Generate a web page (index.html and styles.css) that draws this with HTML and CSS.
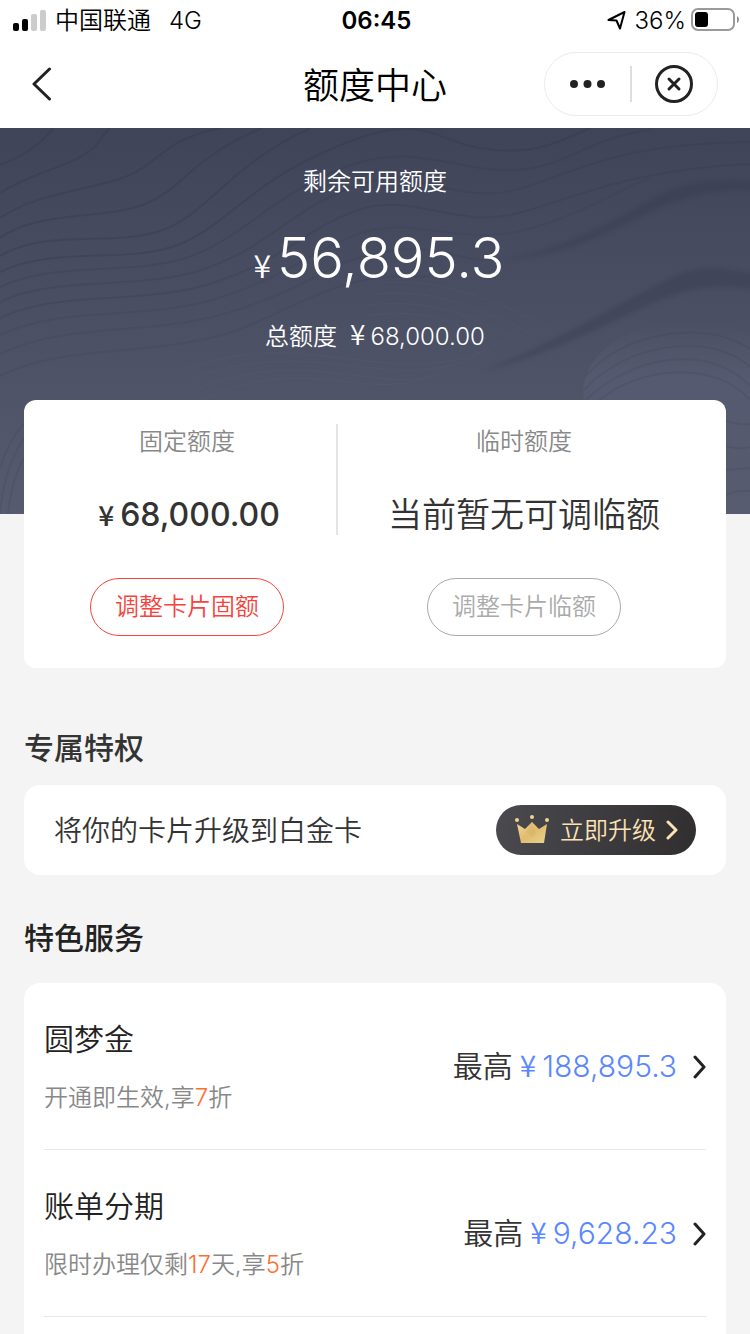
FILE: index.html
```html
<!DOCTYPE html>
<html lang="zh-CN">
<head>
<meta charset="utf-8">
<meta name="viewport" content="width=device-width, initial-scale=1">
<title>额度中心</title>
<link rel="stylesheet" href="styles.css">
</head>
<body>
<div class="status">
  <div class="status-side">
    <svg class="signal" width="34" height="22" viewBox="0 0 34 22" aria-hidden="true"><rect x="0" y="14" width="6" height="8" rx="2"/><rect x="9" y="10" width="6" height="12" rx="2"/><rect class="bar-off" x="18" y="5" width="6" height="17" rx="2"/><rect class="bar-off" x="27" y="1" width="6" height="21" rx="2"/></svg>
    <span class="carrier">中国联通</span>
    <span>4G</span>
  </div>
  <time class="clock">06:45</time>
  <div class="status-side status-end">
    <svg width="20" height="20" viewBox="0 0 20 20" fill="none" stroke="#000" stroke-width="2" stroke-linejoin="round" aria-hidden="true"><path d="M17.500 2 1.500 10 9.500 10.500 13 18.500Z"/></svg>
    <span class="percent">36%</span>
    <svg width="49" height="24" viewBox="0 0 49 24" aria-hidden="true"><rect x="1" y="1" width="42" height="21" rx="6" fill="none" stroke="#9a9a9a" stroke-width="2"/><rect x="4" y="4" width="13" height="15" rx="3"/><path d="M46 8q2 1 2 3.500t-2 3.500Z" fill="#8f8f8f"/></svg>
  </div>
</div>
<header class="nav">
  <button class="icon-btn back" aria-label="返回"><svg width="20" height="36" viewBox="0 0 20 36" fill="none" stroke="#222" stroke-width="3" stroke-linecap="round" stroke-linejoin="round"><path d="M17.500 3 2 18 17.500 33"/></svg></button>
  <h1 class="nav-title">额度中心</h1>
  <div class="capsule">
    <button class="icon-btn capsule-btn" aria-label="更多"><svg width="36" height="10" viewBox="0 0 36 10" fill="#222"><circle cx="4" cy="5" r="4"/><circle cx="17.500" cy="5" r="4"/><circle cx="31" cy="5" r="4"/></svg></button>
    <button class="icon-btn capsule-btn" aria-label="关闭"><svg width="40" height="40" viewBox="0 0 40 40" fill="none" stroke="#222" stroke-linecap="round"><circle cx="19" cy="20" r="17.500" stroke-width="3"/><path d="M14 15 24 25M24 15 14 25" stroke-width="3"/></svg></button>
  </div>
</header>
<main class="page">
  <section class="hero">
    <svg class="waves" viewBox="0 0 750 386" preserveAspectRatio="none" fill="none" aria-hidden="true">
      <defs>
        <linearGradient id="dome" x1="0" y1="0" x2="0" y2="1"><stop offset="0" stop-color="#5f647b" stop-opacity="0"/><stop offset=".3" stop-color="#5f647b" stop-opacity=".4"/><stop offset="1" stop-color="#5f647b" stop-opacity=".1"/></linearGradient>
        <filter id="soft" x="-10%" y="-20%" width="120%" height="140%"><feGaussianBlur stdDeviation="2"/></filter>
      </defs>
      <path d="M584 272C578 225 630 196 680 194C715 192 735 198 750 208V386H600Z" fill="url(#dome)"/>
      <g fill="#32374c" opacity=".32" filter="url(#soft)">
        <path d="M480 244C560 213 610 180 660 155S720 142 760 146V162C725 158 700 156 660 172S560 224 480 244Z"/>
        <path d="M500 132C560 123 610 95 650 72S720 52 760 53V63C725 60 690 66 655 82S565 130 500 132Z"/>
      </g>
      <g stroke="#32374c" stroke-width="2" opacity=".32">
        <path d="M0 37C25 28 44 13 53 0"/>
        <path d="M0 65C30 46 62 40 82 28S100 8 110 0"/>
        <path d="M0 90C36 65 90 62 125 49S160 13 220 0"/>
        <path d="M0 110C38 82 105 92 145 76S190 30 262 0"/>
        <path d="M0 128C48 100 112 119 160 103S225 40 310 0"/>
        <path d="M0 144C55 117 130 137 180 116S250 54 338 18 430 12 480 20 550 18 590 0"/>
      </g>
      <g stroke="#32374c" stroke-width="2" opacity=".22">
        <path d="M0 159C55 132 140 149 194 127S275 66 345 39 460 46 516 42 580 12 650 2"/>
        <path d="M0 174C55 146 145 164 210 139S285 86 350 60 450 76 510 63 600 16 750 14"/>
        <path d="M0 190C60 161 145 178 216 154S302 103 355 83 455 99 510 87 620 42 750 36"/>
      </g>
      <g stroke="#32374c" stroke-width="2" opacity=".14">
        <path d="M0 207C65 176 150 194 225 168S315 119 365 104 460 117 520 103 620 60 650 50"/>
        <path d="M0 226C70 192 155 210 240 181S325 135 382 124 465 137 500 131"/>
        <path d="M0 248C65 213 175 232 255 195S360 144 430 149"/>
        <path d="M0 386Q4 340 24 310M8 386Q12 350 24 330M0 340Q10 310 24 296"/>
        <path d="M586 248C620 205 705 190 750 221M584 262C625 216 710 202 750 239M586 272C630 228 710 214 750 258M600 272C640 238 716 232 750 272"/>
        <path d="M724 292Q740 298 750 296M724 318Q740 322 750 319M724 342 750 340M724 368Q736 362 750 363"/>
      </g>
      <g stroke="#747990" stroke-width="1" opacity=".1">
        <path d="M190 240C310 195 400 270 500 215M195 250C310 205 400 270 480 226M200 260C310 215 395 275 450 240M205 270C310 225 365 275 430 248M380 155C440 150 490 170 550 200M375 166C430 160 480 180 530 205M370 177C420 170 470 185 510 209M365 188C410 180 450 190 490 212"/>
      </g>
    </svg>
    <p class="hero-label">剩余可用额度</p>
    <p class="hero-amount"><span class="yen hero-yen">¥</span>56,895.3</p>
    <p class="hero-total">总额度<span class="yen total-yen">¥</span>68,000.00</p>
  </section>

  <section class="card quotas">
    <div class="quota quota-fixed">
      <div class="quota-info">
        <h2 class="quota-label">固定额度</h2>
        <p class="quota-value quota-number"><span class="yen quota-yen">¥</span>68,000.00</p>
      </div>
      <button class="pill">调整卡片固额</button>
    </div>
    <div class="quota quota-temp">
      <div class="quota-info">
        <h2 class="quota-label">临时额度</h2>
        <p class="quota-value">当前暂无可调临额</p>
      </div>
      <button class="pill" disabled>调整卡片临额</button>
    </div>
  </section>

  <h2 class="section-title">专属特权</h2>
  <section class="card upgrade">
    <p class="upgrade-text">将你的卡片升级到白金卡</p>
    <button class="upgrade-btn">
      <svg width="36" height="30" viewBox="0 0 36 30" aria-hidden="true">
        <defs><linearGradient id="gold" x1="0" y1="0" x2="1" y2="1"><stop offset="0" stop-color="#f2d797"/><stop offset=".5" stop-color="#dfbd70"/><stop offset="1" stop-color="#ecd08c"/></linearGradient></defs>
        <path d="M3 9 11 14 18 7 25 14 33 9 30 28H7Z" fill="url(#gold)"/>
        <path d="M18 7 22 18 18 22 12 17Z" fill="#d2ae61" opacity=".4"/>
        <g fill="#f0d496"><circle cx="3" cy="5" r="2"/><circle cx="18" cy="2" r="2"/><circle cx="33" cy="5" r="2"/></g>
      </svg>
      <span>立即升级</span>
      <svg width="12" height="22" viewBox="0 0 12 22" fill="none" stroke="#fbe3b5" stroke-width="3" stroke-linecap="round" stroke-linejoin="round" aria-hidden="true"><path d="M2 3 10 11 2 19"/></svg>
    </button>
  </section>

  <h2 class="section-title services-title">特色服务</h2>
  <section class="card services">
    <a class="service" href="#">
      <div class="service-main">
        <h3 class="service-name">圆梦金</h3>
        <p class="service-note">开通即生效,享<em>7</em>折</p>
      </div>
      <p class="service-max">最高<span class="service-amount"><span class="yen service-yen">¥</span>188,895.3</span></p>
      <svg width="14" height="24" viewBox="0 0 14 24" fill="none" stroke="#222" stroke-width="3" stroke-linecap="round" stroke-linejoin="round" aria-hidden="true"><path d="M3 2 12 12 3 22"/></svg>
    </a>
    <a class="service" href="#">
      <div class="service-main">
        <h3 class="service-name">账单分期</h3>
        <p class="service-note">限时办理仅剩<em>17</em>天,享<em>5</em>折</p>
      </div>
      <p class="service-max">最高<span class="service-amount"><span class="yen service-yen">¥</span>9,628.23</span></p>
      <svg width="14" height="24" viewBox="0 0 14 24" fill="none" stroke="#222" stroke-width="3" stroke-linecap="round" stroke-linejoin="round" aria-hidden="true"><path d="M3 2 12 12 3 22"/></svg>
    </a>
  </section>
</main>
</body>
</html>
```
FILE: styles.css
```css
* { box-sizing: border-box; }

body {
  margin: 0;
  min-height: 100vh;
  display: flex;
  flex-direction: column;
  background: #f4f4f4;
  color: #333;
  font-family: Inter, "Noto Sans CJK SC", sans-serif;
  font-size: 24px;
  font-weight: 350;
  line-height: 36px;
}

h1, h2, h3, p { margin: 0; font-weight: inherit; }
h2, h3 { font-size: inherit; }
svg { display: block; flex: none; }
button { font: inherit; color: inherit; cursor: pointer; }
a { color: inherit; text-decoration: none; }
em { font-style: normal; }

/* The yen sign must not stretch the line it sits in */
.yen { font-family: "Noto Sans CJK SC", sans-serif; line-height: 1px; }

/* Status bar */
.status {
  display: grid;
  grid-template-columns: 1fr auto 1fr;
  align-items: center;
  height: 40px;
  padding: 0 10px 0 13px;
  background: #fff;
  color: #000;
}
.status-side { display: flex; align-items: center; }
.status-end { justify-content: flex-end; }
.signal { margin-right: 8px; }
.bar-off { fill: #ccc; }
.carrier { margin-right: 18px; }
.clock { font-weight: 600; }
.status span, .clock { padding-top: 2px; }
.percent { margin: 0 5px 0 8px; }

/* Navigation */
.nav {
  display: grid;
  grid-template-columns: 1fr auto 1fr;
  align-items: center;
  height: 88px;
  padding: 0 32px;
  background: #fff;
}
.icon-btn {
  display: flex;
  align-items: center;
  justify-content: center;
  padding: 0;
  border: 0;
  background: none;
}
.back { justify-self: start; }
.nav-title { padding-top: 3px; color: #000; font-size: 36px; line-height: 48px; }
.capsule {
  justify-self: end;
  display: flex;
  align-items: center;
  width: 174px;
  height: 64px;
  border: 1px solid #ebebeb;
  border-radius: 32px;
}
.capsule-btn { flex: 1; height: 36px; }
.capsule-btn + .capsule-btn { border-left: 2px solid #ddd; }

.page { flex: 1; display: flex; flex-direction: column; }

/* Available quota */
.hero {
  position: relative;
  padding: 36px 24px 159px;
  background: linear-gradient(#3f4459, #565b70);
  color: #fff;
  text-align: center;
}
.waves { position: absolute; inset: 0; width: 100%; height: 100%; }
.hero-label, .hero-amount, .hero-total { position: relative; }
.hero-amount { margin: 22px 0 25px; font-size: 56px; line-height: 72px; font-weight: 300; }
.hero-yen { margin: 0 6px 0 8px; font-size: 32px; font-weight: 350; }
.total-yen { margin: 0 5px 0 13px; font-size: 28px; }

.card { margin: 0 24px; border-radius: 16px; background: #fff; }

/* Fixed and temporary quota */
.quotas {
  position: relative;
  display: grid;
  grid-template-columns: 4fr 5fr;
  margin-top: -114px;
  padding: 24px 0 32px;
  border-radius: 12px;
  text-align: center;
}
.quota { display: flex; flex-direction: column; align-items: center; }
.quota-info { align-self: stretch; margin-bottom: 43px; }
.quota-fixed { padding-left: 14px; }
.quota-temp .quota-info { padding-right: 16px; border-left: 2px solid #e5e5e5; }
.quota-temp .pill { margin-right: 14px; }
.quota-label { color: #888; }
.quota-value { margin-top: 35px; font-size: 34px; line-height: 40px; }
.quota-number { font-size: 32px; font-weight: 500; }
.quota-yen { margin: 0 6px 0 4px; font-size: 28px; }
.pill {
  width: 194px;
  height: 58px;
  padding: 0;
  border: 1px solid #f5443d;
  border-radius: 29px;
  background: #fff;
  color: #f5443d;
}
.pill:disabled { border-color: #aaa; color: #aaa; cursor: default; }

/* Upgrade */
.section-title { margin: 58px 24px 15px; font-size: 30px; line-height: 44px; font-weight: 500; }
.upgrade {
  display: flex;
  align-items: center;
  justify-content: space-between;
  padding: 20px 30px;
}
.upgrade-text { padding-top: 2px; font-size: 28px; }
.upgrade-btn {
  display: flex;
  align-items: center;
  gap: 10px;
  height: 50px;
  padding: 0 18px;
  border: 0;
  border-radius: 25px;
  background: linear-gradient(100deg, #4b4a50, #302e2e);
  color: #fbe3b5;
}
.upgrade-btn span { padding-top: 2px; }

/* Services */
.services-title { margin: 41px 24px 23px; color: #222; }
.services { flex: 1; padding: 0 20px; border-radius: 16px 16px 0 0; }
.service {
  display: flex;
  align-items: center;
  padding: 34px 0 33px;
  border-bottom: 1px solid #e8e8e8;
}
.service-main { flex: 1; }
.service-name { margin-bottom: 19px; color: #222; font-size: 30px; line-height: 44px; }
.service-note { color: #888; }
.service-note em { color: #ff6e2e; }
.service-max { margin-right: 15px; padding-bottom: 2px; font-size: 30px; line-height: 44px; }
.service-amount { margin-left: 7px; color: #5a87ff; font-weight: 300; }
.service-yen { margin-right: 6px; font-weight: 350; }
```
